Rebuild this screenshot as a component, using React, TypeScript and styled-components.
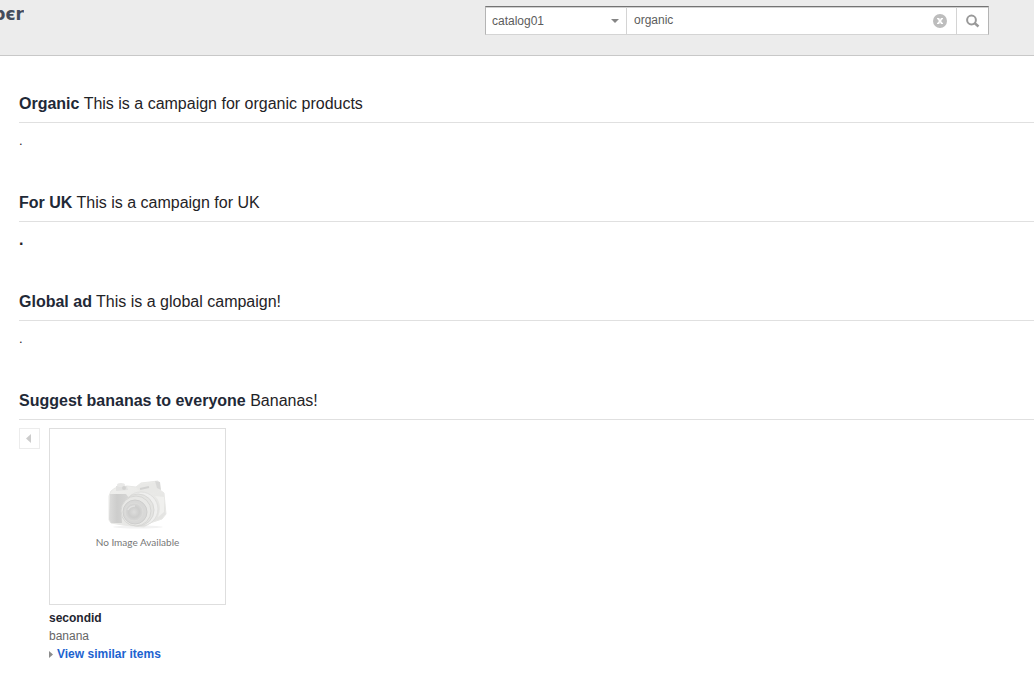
import React from "react";
import styled, { createGlobalStyle } from "styled-components";

const GlobalStyle = createGlobalStyle`
  *, *::before, *::after { box-sizing: border-box; }
  body {
    margin: 0;
    background: #fff;
    color: #1f2326;
    font: 12px/18px "Liberation Sans", Arial, sans-serif;
  }
`;

const Header = styled.header`
  display: flex;
  justify-content: space-between;
  align-items: flex-start;
  height: 56px;
  padding: 6px 45px 0 0;
  background: #ececec;
  border-bottom: 1px solid #c8c8c8;
`;

const LogoClip = styled.div`
  display: flex;
  justify-content: flex-end;
  width: 24px;
  overflow: hidden;
`;

const Logo = styled.span`
  color: #434b5c;
  font: bold 17px/16px "DejaVu Sans", sans-serif;
`;

const SearchForm = styled.form`
  display: flex;
  width: 504px;
  height: 29px;
  background: #fff;
  border: 1px solid #b4b4b4;
  border-top-color: #747474;
  border-bottom-color: #d4d4d4;
  box-shadow: inset 0 1px 0 #d0d0d0;
`;

const SelectCell = styled.div`
  display: flex;
  align-items: center;
  width: 141px;
  padding-right: 7px;
  border-right: 1px solid #d4d4d4;
`;

const CatalogSelect = styled.select`
  flex: 1;
  min-width: 0;
  padding: 0 0 0 6px;
  appearance: none;
  border: 0;
  background: transparent;
  color: #5c5c5c;
  font: inherit;
`;

const SearchInput = styled.input`
  flex: 1;
  min-width: 0;
  padding: 0 7px 2px;
  border: 0;
  background: transparent;
  color: #5c5c5c;
  font: inherit;
`;

const IconButton = styled.button<{ $divided?: boolean }>`
  display: flex;
  align-items: center;
  justify-content: center;
  width: 32px;
  padding: 0;
  background: transparent;
  border: 0;
  border-left: ${(p) => (p.$divided ? "1px solid #d4d4d4" : "0")};
`;

const Main = styled.main`
  padding: 39px 0 0 19px;
`;

const Campaign = styled.section`
  margin-bottom: 42px;
`;

const CampaignTitle = styled.h2`
  margin: 0 0 8px;
  padding-bottom: 9px;
  border-bottom: 1px solid #e0e0e0;
  font-size: 16px;
  font-weight: normal;
  line-height: 18px;

  strong { color: #1f2937; }
`;

const Placeholder = styled.p<{ $strong?: boolean }>`
  height: 21px;
  margin: 0;
  font-size: ${(p) => (p.$strong ? "16px" : "13px")};
  font-weight: ${(p) => (p.$strong ? "bold" : "normal")};
  line-height: 20px;
`;

const Carousel = styled.div`
  display: flex;
  align-items: flex-start;
  gap: 9px;
`;

const PreviousButton = styled.button`
  display: flex;
  align-items: center;
  justify-content: center;
  width: 21px;
  height: 21px;
  padding: 0;
  background: #fff;
  border: 1px solid #ececec;
`;

const Product = styled.article`
  width: 177px;
`;

const Thumbnail = styled.figure`
  display: flex;
  flex-direction: column;
  align-items: center;
  height: 177px;
  margin: 0 0 4px;
  padding-top: 51px;
  border: 1px solid #dedede;
`;

const Caption = styled.figcaption`
  color: #777;
  font: 10px/12px Lato, sans-serif;
  margin-top: 6px;
`;

const ProductId = styled.div`
  color: #1f2530;
  font-weight: bold;
`;

const ProductName = styled.div`
  color: #666;
`;

const SimilarLink = styled.a`
  display: flex;
  align-items: center;
  gap: 4px;
  color: #1c63d0;
  font-weight: bold;
  text-decoration: none;
`;

const Camera = () => (
  <svg width="62" height="50" viewBox="0 0 62 50" aria-hidden="true">
    <defs>
      <linearGradient id="body" x1="0" y1="0" x2="1" y2="1">
        <stop offset="0" stopColor="#f0f0ee" />
        <stop offset="1" stopColor="#e2e2e0" />
      </linearGradient>
      <linearGradient id="grip" x1="0" y1="0" x2="1" y2="0">
        <stop offset="0" stopColor="#dcdcdb" />
        <stop offset=".4" stopColor="#cdcdcc" />
        <stop offset="1" stopColor="#d6d6d5" />
      </linearGradient>
      <radialGradient id="glass">
        <stop offset="0" stopColor="#dddddc" />
        <stop offset=".6" stopColor="#cdcdcc" />
        <stop offset="1" stopColor="#d9d9d8" />
      </radialGradient>
    </defs>
    <ellipse cx="31" cy="47" rx="25" ry="1.5" fill="#f2f2f2" />
    <path d="M4 11 8 8 20 6 29 7 34 3 51 1 53 10 57 13 59 34 55 39 43 43 37 47 16 45 4 43 2 40 2 16Z" fill="url(#body)" stroke="#e8e8e6" />
    <path d="M3 14 19 14 22 18 14 28 15 43 4 43 2 39Z" fill="url(#grip)" />
    <path d="M9 6 20 6 21 10 9 11Z" fill="#e2e2e1" />
    <ellipse cx="14" cy="5" rx="4" ry="2" fill="#e8e8e7" />
    <circle cx="17" cy="8" r="2" fill="#d2d2d1" />
    <path d="M29 7 34 4 49 3 52 11 45 13 33 12Z" fill="#e8e8e6" />
    <path d="M33 9 42 7" stroke="#d2d2d1" strokeWidth="2" />
    <path d="M48 1 53 2 54 10 50 8Z" fill="#d8d8d7" />
    <path d="M48 16Q56 24 51 37L57 32 57 17Z" fill="#f0f0ee" />
    <circle cx="34" cy="29" r="17" fill="#efefee" stroke="#dfdfdd" />
    <circle cx="31" cy="30" r="16" fill="#e4e4e2" stroke="#d8d8d6" />
    <circle cx="29" cy="31" r="15" fill="#e8e8e6" stroke="#d6d6d4" />
    <circle cx="28" cy="32" r="12" fill="#d8d8d7" stroke="#cececd" />
    <circle cx="27" cy="32" r="9" fill="url(#glass)" stroke="#dcdcda" />
    <path d="M21 30Q23 26 28 26" fill="none" stroke="#e2e2e1" strokeWidth="1.5" />
  </svg>
);

const App = () => (
  <>
    <GlobalStyle />
    <Header>
      <LogoClip><Logo>bєr</Logo></LogoClip>
      <SearchForm onSubmit={(e) => e.preventDefault()}>
        <SelectCell>
          <CatalogSelect aria-label="Catalog" defaultValue="catalog01">
            <option>catalog01</option>
          </CatalogSelect>
          <svg width="8" height="4" viewBox="0 0 8 4" aria-hidden="true">
            <path d="M0 0H8L4 4Z" fill="#858585" />
          </svg>
        </SelectCell>
        <SearchInput aria-label="Search" defaultValue="organic" />
        <IconButton type="button" aria-label="Clear search">
          <svg width="14" height="14" viewBox="0 0 14 14">
            <circle cx="7" cy="7" r="7" fill="#bdbdbd" />
            <path d="M5 4.5 9 9.5M9 4.5 5 9.5" stroke="#fff" strokeWidth="1.8" />
            <path d="M4 4.5H6.4M7.8 4.5H10M4 9.5H6.4M7.8 9.5H10" stroke="#fff" />
          </svg>
        </IconButton>
        <IconButton type="submit" aria-label="Search" $divided>
          <svg width="14" height="14" viewBox="0 0 14 14">
            <circle cx="5.5" cy="6" r="4.4" fill="none" stroke="#999" strokeWidth="2" />
            <path d="M8.5 9 12.5 12.5" stroke="#999" strokeWidth="2.4" />
          </svg>
        </IconButton>
      </SearchForm>
    </Header>
    <Main>
      <Campaign>
        <CampaignTitle><strong>Organic</strong> This is a campaign for organic products</CampaignTitle>
        <Placeholder>.</Placeholder>
      </Campaign>
      <Campaign>
        <CampaignTitle><strong>For UK</strong> This is a campaign for UK</CampaignTitle>
        <Placeholder $strong>.</Placeholder>
      </Campaign>
      <Campaign>
        <CampaignTitle><strong>Global ad</strong> This is a global campaign!</CampaignTitle>
        <Placeholder>.</Placeholder>
      </Campaign>
      <section>
        <CampaignTitle><strong>Suggest bananas to everyone</strong> Bananas!</CampaignTitle>
        <Carousel>
          <PreviousButton type="button" aria-label="Previous">
            <svg width="7" height="9" viewBox="0 0 7 9"><path d="M5 0V9L0 4.5Z" fill="#ccc" /></svg>
          </PreviousButton>
          <Product>
            <Thumbnail>
              <Camera />
              <Caption>No Image Available</Caption>
            </Thumbnail>
            <ProductId>secondid</ProductId>
            <ProductName>banana</ProductName>
            <SimilarLink href="#similar">
              <svg width="4" height="7" viewBox="0 0 4 7" aria-hidden="true"><path d="M0 0V7L4 3.5Z" fill="#8c8c8c" /></svg>
              View similar items
            </SimilarLink>
          </Product>
        </Carousel>
      </section>
    </Main>
  </>
);

export default App;
